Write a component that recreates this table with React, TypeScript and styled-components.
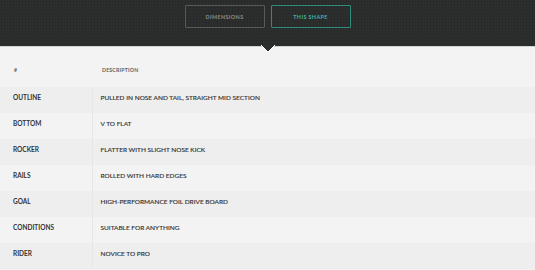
import styled, { createGlobalStyle } from 'styled-components';

const GlobalStyle = createGlobalStyle`
  html, body {
    margin: 0;
    padding: 0;
    background: #f3f3f3;
  }
  body {
    font-family: Lato, 'Open Sans', sans-serif;
  }
`;

const TopBar = styled.header`
  position: relative;
  height: 47px;
  background-color: #2b2e2c;
  background-image: radial-gradient(circle, #232624 0.7px, transparent 0.9px);
  background-size: 3px 3px;
  border-bottom: 1px solid #d2d2d2;
  display: flex;
  justify-content: center;
  align-items: flex-start;
  padding-top: 5px;
  box-sizing: border-box;
  gap: 6px;
`;

const Tab = styled.button<{ $active?: boolean }>`
  width: 80px;
  height: 23px;
  background: transparent;
  border: 1px solid ${({ $active }) => ($active ? '#2e8c7c' : '#575a58')};
  border-radius: 1px;
  color: ${({ $active }) => ($active ? '#41b4a0' : '#8b8e8c')};
  font-family: Lato, sans-serif;
  font-weight: 700;
  font-size: 5.4px;
  letter-spacing: 0.4px;
  text-transform: uppercase;
  padding: 0;
  cursor: pointer;
`;

const Pointer = styled.svg`
  position: absolute;
  left: 50%;
  bottom: -7px;
  transform: translateX(-50%);
  width: 15px;
  height: 8px;
`;

const Table = styled.table`
  width: 100%;
  border-collapse: collapse;
  table-layout: fixed;
`;

const HeadCell = styled.th<{ $first?: boolean }>`
  height: 40px;
  padding: 5px 0 0 ${({ $first }) => ($first ? '14px' : '10px')};
  text-align: left;
  vertical-align: middle;
  font-size: 5.2px;
  font-weight: 700;
  letter-spacing: 0.2px;
  color: #5f5f5f;
  width: ${({ $first }) => ($first ? '92px' : 'auto')};
  box-sizing: border-box;
`;

const Row = styled.tr<{ $shade: boolean }>`
  height: 26px;
  background: ${({ $shade }) => ($shade ? '#eeeeee' : '#f3f3f3')};
`;

const Label = styled.td`
  padding: 7px 0 0 13px;
  vertical-align: top;
  font-size: 6.5px;
  line-height: 7px;
  font-weight: 700;
  color: #333333;
  border-right: 1px solid #e6e6e6;
`;

const Value = styled.td`
  padding: 7px 0 0 8px;
  vertical-align: top;
  font-size: 6.5px;
  line-height: 7px;
  font-weight: 400;
  color: #333333;
  -webkit-text-stroke: 0.15px #333333;
`;

const specs = [
  ['Outline', 'Pulled in nose and tail, straight mid section'],
  ['Bottom', 'V to flat'],
  ['Rocker', 'Flatter with slight nose kick'],
  ['Rails', 'Rolled with hard edges'],
  ['Goal', 'High-performance foil drive board'],
  ['Conditions', 'Suitable for anything'],
  ['Rider', 'Novice to pro'],
];

export default function App() {
  return (
    <>
      <GlobalStyle />
      <TopBar>
        <Tab>Dimensions</Tab>
        <Tab $active>This Shape</Tab>
        <Pointer viewBox="0 0 15 8">
          <path d="M0.5 0 L7.5 7 L14.5 0" fill="#2b2e2c" stroke="#ffffff" strokeWidth="1" />
        </Pointer>
      </TopBar>
      <Table>
        <thead>
          <tr>
            <HeadCell $first>#</HeadCell>
            <HeadCell>DESCRIPTION</HeadCell>
          </tr>
        </thead>
        <tbody>
          {specs.map(([label, value], i) => (
            <Row key={label} $shade={i % 2 === 0}>
              <Label>{label.toUpperCase()}</Label>
              <Value>{value.toUpperCase()}</Value>
            </Row>
          ))}
        </tbody>
      </Table>
    </>
  );
}
